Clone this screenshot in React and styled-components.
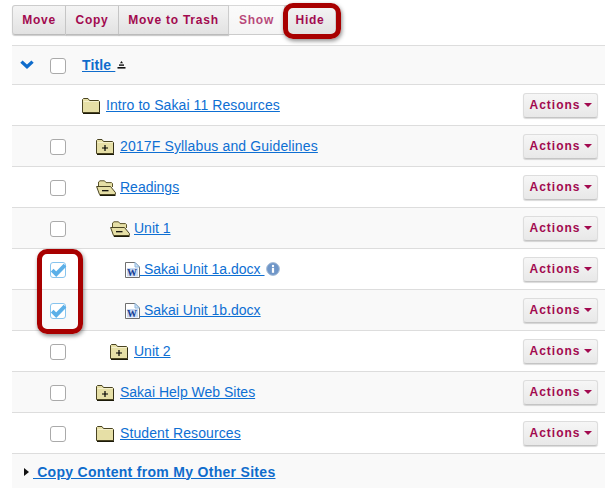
import React from 'react';
import styled, { createGlobalStyle } from 'styled-components';

const GlobalStyle = createGlobalStyle`
  html, body {
    margin: 0;
    padding: 0;
    background: #fff;
    overflow: hidden;
  }
  body {
    font-family: "Liberation Sans", Arial, sans-serif;
    font-size: 14px;
  }
`;

const Page = styled.div`
  position: relative;
  width: 605px;
  height: 488px;
  padding: 5px 0 0 12px;
  box-sizing: border-box;
  overflow: hidden;
`;

const Toolbar = styled.div`
  display: flex;
  height: 30px;
  margin-bottom: 10px;
`;

const ToolButton = styled.button`
  position: relative;
  width: ${(p) => p.$width}px;
  height: 30px;
  padding: 0;
  border: 1px solid #ccc;
  border-bottom-color: #bbb;
  border-left-width: ${(p) => (p.$first ? 1 : 0)}px;
  border-radius: ${(p) => (p.$first ? '3px 0 0 3px' : '0')};
  background: linear-gradient(#f4f4f4, #e2e2e2);
  box-shadow: 0 1px 1px rgba(0, 0, 0, 0.2);
  color: #a20a4f;
  font-family: inherit;
  font-size: 12px;
  font-weight: bold;
  letter-spacing: 0.75px;
  opacity: ${(p) => (p.$muted ? 0.75 : 1)};

  ${(p) => p.$muted && 'background: linear-gradient(#fafafa, #f1f1f1); box-shadow: none;'}
`;

const Callout = styled.span`
  position: absolute;
  border: 5px solid #a80000;
  border-radius: 10px;
  box-shadow: 1px 2px 4px rgba(0, 0, 0, 0.45);
  pointer-events: none;
  box-sizing: border-box;
`;

const HideCallout = styled(Callout)`
  left: -2px;
  top: -3px;
  width: 58px;
  height: 36px;
`;

const CheckCallout = styled(Callout)`
  left: 25px;
  top: 203px;
  width: 46px;
  height: 85px;
`;

const Table = styled.div`
  position: relative;
  border-top: 1px solid #ddd;
`;

const Row = styled.div`
  display: flex;
  align-items: center;
  height: ${(p) => (p.$header ? 38 : 40)}px;
  border-bottom: 1px solid #ddd;
  background: ${(p) => (p.$shaded ? '#f9f9f9' : '#fff')};
`;

const ToggleCell = styled.div`
  display: flex;
  width: 38px;
  flex: none;
  padding-left: 8px;
  box-sizing: border-box;
`;

const CheckCell = styled.div`
  display: flex;
  justify-content: center;
  width: 16px;
  flex: none;
  margin: 1px 16px 0 0;
`;

const Checkbox = styled.span`
  display: flex;
  align-items: center;
  justify-content: center;
  width: 14px;
  height: 14px;
  border: 1px solid ${(p) => (p.$checked ? '#87c4ee' : '#aaa')};
  border-radius: 3px;
  background: #fff;
`;

const TitleCell = styled.div`
  display: flex;
  align-items: center;
  flex: 1;
  padding-left: ${(p) => p.$indent}px;
`;

const IconSlot = styled.span`
  display: flex;
  flex: none;
  width: ${(p) => p.$width || 24}px;
  margin-top: 1px;
`;

const FileLink = styled.a`
  color: #0e6fd3;
  text-decoration: underline;
  white-space: pre;
  letter-spacing: ${(p) => p.$tracking || 0}px;
`;

const HeaderLink = styled(FileLink)`
  color: #0f6ccc;
  font-weight: bold;
  margin-top: -1px;
`;

const SortSlot = styled.span`
  display: flex;
  margin-left: 2px;
`;

const InfoWrap = styled.span`
  display: flex;
  margin-left: 1px;
`;

const ActionsButton = styled.button`
  display: flex;
  align-items: center;
  justify-content: center;
  gap: 3px;
  width: 75px;
  height: 25px;
  margin-right: 7px;
  padding: 0;
  border: 1px solid #ddd;
  border-bottom-color: #c4c4c4;
  border-radius: 3px;
  background: linear-gradient(#f6f6f6, #e8e8e8);
  box-shadow: 0 1px 1px rgba(0, 0, 0, 0.15);
  color: #a20a4f;
  font-family: inherit;
  font-size: 12px;
  font-weight: bold;
  letter-spacing: 1px;
`;

const Caret = styled.span`
  width: 0;
  height: 0;
  border-left: 4px solid transparent;
  border-right: 4px solid transparent;
  border-top: 4px solid #a20a4f;
`;

const Footer = styled.div`
  display: flex;
  align-items: center;
  height: 35px;
  padding-left: 12px;
  background: #f9f9f9;
`;

const FooterArrow = styled.span`
  width: 0;
  height: 0;
  margin-right: 4px;
  border-top: 4px solid transparent;
  border-bottom: 4px solid transparent;
  border-left: 5px solid #111;
`;

const FooterLink = styled(FileLink)`
  color: #0f6ccc;
  font-weight: bold;
`;

const Chevron = () => (
  <svg width="14" height="10" viewBox="0 0 14 10">
    <path d="M0.3 2.8 2.6 0.5 7 4.6 11.4 0.5 13.7 2.8 7 9z" fill="#0f6ccc" />
  </svg>
);

const Tick = () => (
  <svg width="16" height="14" viewBox="0 0 16 14" style={{ overflow: 'visible' }}>
    <path d="M2.2 7.2 6.2 11.2 15 2.2" fill="none" stroke="#5cb0e8" strokeWidth="3.8" />
  </svg>
);

const SortIcon = () => (
  <svg width="9" height="8" viewBox="0 0 9 8">
    <path d="M4.5 0 6 2.2H3z" fill="#111" />
    <rect x="2" y="3.4" width="5" height="1.4" fill="#111" />
    <rect x="0.5" y="6" width="8" height="1.6" fill="#111" />
  </svg>
);

const ClosedFolder = ({ mark }) => (
  <svg width="18" height="16" viewBox="0 0 18 16">
    <path
      d="M0.5 3V1.5L1.5 0.5H6L7.5 2.5H16.5L17.5 3.5V14.5H0.5z"
      fill="#e6dfa6"
      stroke="#4a4422"
    />
    <path d="M1 15.5H18V4" fill="none" stroke="#1c1a08" />
    <path d="M1.5 3.5H16.5" stroke="#f5f0cc" />
    {mark && <path d="M6 9H12M9 6V12" stroke="#000" strokeWidth="1.2" />}
  </svg>
);

const OpenFolder = () => (
  <svg width="20" height="16" viewBox="0 0 20 16">
    <path d="M2.5 6V2L4 0.8H8.5L10 2.6H15.5L16.5 3.6V7" fill="#e6dfa6" stroke="#5a5228" />
    <path d="M0.6 6.5H14.5L19.4 12.5V14.5H3.5z" fill="#e6dfa6" stroke="#4a4422" />
    <path d="M3.8 15.5H19.5" stroke="#1c1a08" />
    <path d="M6 10.7H12.5" stroke="#000" strokeWidth="1.2" />
  </svg>
);

const WordDoc = () => (
  <svg width="15" height="16" viewBox="0 0 15 16">
    <path d="M0.5 0.5H10L14.5 5V15.5H0.5z" fill="#fff" stroke="#6f6f6f" />
    <path d="M10 0.5V5H14.5z" fill="#cfe4f6" stroke="#8fb6dc" />
    <rect x="2" y="6" width="11" height="8.4" fill="#c9daf2" />
    <text x="2" y="13.6" fontSize="10" fontWeight="bold" fill="#173f96" fontFamily="Liberation Serif, serif">
      W
    </text>
  </svg>
);

const InfoIcon = () => (
  <svg width="14" height="14" viewBox="0 0 14 14">
    <circle cx="7" cy="7" r="6.4" fill="#6f96c8" stroke="#a8bed8" />
    <circle cx="7" cy="3.9" r="1.2" fill="#fff" />
    <rect x="5.9" y="5.8" width="2.2" height="5" fill="#fff" />
  </svg>
);

const rows = [
  { title: 'Intro to Sakai 11 Resources', indent: 0, icon: 'folder', noCheck: true, tracking: 0.08 },
  { title: '2017F Syllabus and Guidelines', indent: 14, icon: 'plus', tracking: 0.14 },
  { title: 'Readings', indent: 14, icon: 'open' },
  { title: 'Unit 1', indent: 28, icon: 'open' },
  { title: ' Sakai Unit 1a.docx ', indent: 43, icon: 'doc', checked: true, info: true },
  { title: ' Sakai Unit 1b.docx', indent: 43, icon: 'doc', checked: true },
  { title: 'Unit 2', indent: 28, icon: 'plus' },
  { title: 'Sakai Help Web Sites', indent: 14, icon: 'plus' },
  { title: 'Student Resources', indent: 14, icon: 'folder', tracking: 0.1 },
];

const RowIcon = ({ type }) => {
  if (type === 'doc') return <IconSlot $width={15}><WordDoc /></IconSlot>;
  if (type === 'open') return <IconSlot><OpenFolder /></IconSlot>;
  return <IconSlot><ClosedFolder mark={type === 'plus'} /></IconSlot>;
};

const ResourceRow = ({ row, shaded }) => (
  <Row $shaded={shaded}>
    <ToggleCell />
    <CheckCell>
      {!row.noCheck && (
        <Checkbox $checked={row.checked}>{row.checked && <Tick />}</Checkbox>
      )}
    </CheckCell>
    <TitleCell $indent={row.indent}>
      <RowIcon type={row.icon} />
      <FileLink $tracking={row.tracking}>{row.title}</FileLink>
      {row.info && (
        <InfoWrap>
          <InfoIcon />
        </InfoWrap>
      )}
    </TitleCell>
    <ActionsButton>
      Actions
      <Caret />
    </ActionsButton>
  </Row>
);

const App = () => (
  <Page>
    <GlobalStyle />
    <Toolbar>
      <ToolButton $width={54} $first>Move</ToolButton>
      <ToolButton $width={53}>Copy</ToolButton>
      <ToolButton $width={110}>Move to Trash</ToolButton>
      <ToolButton $width={56} $muted>Show</ToolButton>
      <ToolButton $width={51}>
        Hide
        <HideCallout />
      </ToolButton>
    </Toolbar>
    <Table>
      <Row $header $shaded>
        <ToggleCell>
          <Chevron />
        </ToggleCell>
        <CheckCell>
          <Checkbox />
        </CheckCell>
        <TitleCell $indent={0}>
          <HeaderLink $tracking={0.15}>{'Title '}</HeaderLink>
          <SortSlot>
            <SortIcon />
          </SortSlot>
        </TitleCell>
      </Row>
      {rows.map((row, i) => (
        <ResourceRow key={row.title} row={row} shaded={i % 2 === 1} />
      ))}
      <CheckCallout />
      <Footer>
        <FooterArrow />
        <FooterLink $tracking={0.3}> Copy Content from My Other Sites</FooterLink>
      </Footer>
    </Table>
  </Page>
);

export default App;
